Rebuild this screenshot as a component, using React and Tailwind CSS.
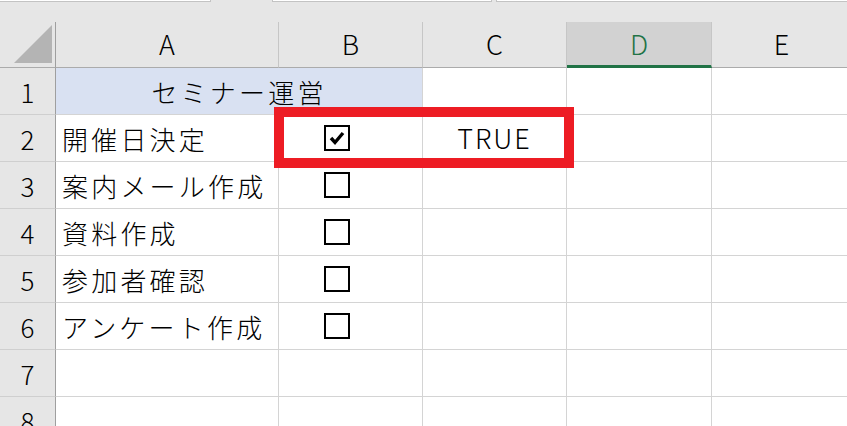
import React from "react";

const FONT = { fontFamily: '"Noto Sans CJK JP", "Noto Sans", sans-serif' };

function Box({ checked }) {
  return (
    <div className="w-[26px] h-[26px] border-2 border-black bg-white flex items-center justify-center">
      {checked && (
        <svg width="18" height="18" viewBox="0 0 18 18">
          <path d="M3 9 L7 13.5 L15 4" fill="none" stroke="black" strokeWidth="3.4" strokeLinecap="butt" strokeLinejoin="miter" />
        </svg>
      )}
    </div>
  );
}

const rows = [
  { n: 2, a: "開催日決定", checked: true, c: "TRUE" },
  { n: 3, a: "案内メール作成", box: true },
  { n: 4, a: "資料作成", box: true },
  { n: 5, a: "参加者確認", box: true },
  { n: 6, a: "アンケート作成", box: true },
  { n: 7 },
  { n: 8 },
];

export default function App() {
  const cell = "h-[47px] border-r border-b border-[#d4d4d4] bg-white flex items-center";
  const rowHead = "h-[47px] border-r border-b border-r-[#9f9f9f] border-b-[#cfcfcf] bg-[#e6e6e6] flex items-center justify-center text-[26px] font-light text-black";
  return (
    <div className="relative w-[847px] h-[426px] overflow-hidden bg-[#e6e6e6]" style={FONT}>
      {/* top strip (formula bar remnant) */}
      <div className="h-[22px] flex items-start gap-0">
        <div className="w-[211px] h-[2px] bg-white border-b border-r border-[#c3c3c3]" />
        <div className="w-[61px]" />
        <div className="w-[220px] h-[2px] bg-white border-b border-l border-r border-[#c3c3c3]" />
        <div className="w-[4px]" />
        <div className="flex-1 h-[2px] bg-white border-b border-l border-[#c3c3c3]" />
      </div>

      <div className="grid grid-cols-[56px_223px_144px_144px_145px_140px]">
        {/* header row */}
        <div className="h-[46px] bg-[#e6e6e6] border-r border-b border-r-[#9f9f9f] border-b-[#ababab] flex items-end justify-end pr-[3px] pb-[4px]">
          <svg width="38" height="38" viewBox="0 0 38 38">
            <polygon points="38,0 38,38 0,38" fill="#b4b4b4" />
          </svg>
        </div>
        {["A", "B", "C"].map((l) => (
          <div key={l} className="h-[46px] bg-[#e6e6e6] border-r border-b border-r-[#c6c6c6] border-b-[#ababab] flex items-center justify-center text-[27px] font-light text-black">
            {l}
          </div>
        ))}
        <div className="h-[46px] bg-[#d2d2d2] border-r border-r-[#c6c6c6] border-b-[3px] border-b-[#217346] flex items-center justify-center text-[27px] font-light text-[#217346] pt-[2px]">
          D
        </div>
        <div className="h-[46px] bg-[#e6e6e6] border-r border-b border-r-[#c6c6c6] border-b-[#ababab] flex items-center justify-center text-[27px] font-light text-black">
          E
        </div>

        {/* row 1 */}
        <div className={rowHead}>1</div>
        <div className="col-span-2 h-[47px] bg-[#d9e1f2] border-r border-b border-[#d4d4d4] flex items-center justify-center text-[26px] font-light tracking-[3.2px] text-black">
          セミナー運営
        </div>
        <div className={cell} />
        <div className={cell} />
        <div className={cell} />

        {rows.map((r) => (
          <React.Fragment key={r.n}>
            <div className={rowHead}>{r.n}</div>
            <div className={`${cell} pl-[6px] text-[26px] font-light tracking-[3.2px] text-black whitespace-nowrap`}>{r.a || ""}</div>
            <div className={`${cell} justify-start pl-[45px]`}>
              {(r.box || r.checked) && <Box checked={r.checked} />}
            </div>
            <div className={`${cell} justify-center text-[27px] font-light tracking-[2px] text-black`}>{r.c || ""}</div>
            <div className={cell} />
            <div className={cell} />
          </React.Fragment>
        ))}
      </div>

      {/* red highlight */}
      <div className="absolute left-[274px] top-[107px] w-[300px] h-[61px] border-[10px] border-[#ed1c24]" />
    </div>
  );
}
